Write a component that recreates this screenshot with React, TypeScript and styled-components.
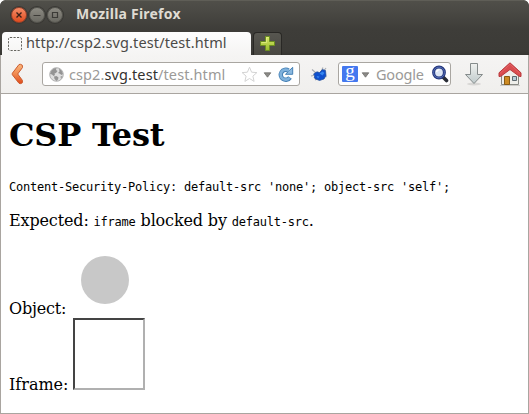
import React from 'react';
import styled, { createGlobalStyle } from 'styled-components';

const GlobalStyle = createGlobalStyle`
  * { box-sizing: border-box; }
  html, body { margin: 0; padding: 0; background: #fff; overflow: hidden; }
`;

const Window = styled.div`
  width: 529px;
  height: 414px;
  display: flex;
  flex-direction: column;
  background: #3c3b37;
  border-radius: 6px 6px 0 0;
  overflow: hidden;
  font-family: 'Noto Sans', 'Open Sans', sans-serif;
`;

const Frame = styled.div`
  height: 55px;
  flex: none;
  display: flex;
  flex-direction: column;
  background: linear-gradient(#504f49 0, #4a4944 10px, #3e3d39 28px, #3c3b37 50px, #353430 55px);
  border-top: 1px solid #5f5e57;
  border-radius: 6px 6px 0 0;
`;

const TitleBar = styled.div`
  height: 31px;
  flex: none;
  display: flex;
  align-items: center;
  padding: 0 0 4px 11px;
`;

const WindowButton = styled.span<{ $close?: boolean }>`
  width: 16px;
  height: 16px;
  margin-right: 2px;
  border-radius: 50%;
  display: flex;
  border: 1px solid ${p => (p.$close ? '#92402a' : '#55544e')};
  background: ${p => (p.$close ? 'linear-gradient(#f58c67, #df4b1e)' : 'linear-gradient(#8c8a82, #6a6962)')};
  box-shadow: 0 0 0 1px #393834;
`;

const Title = styled.span`
  margin: 0 0 2px 11px;
  color: #dfdbd2;
  font-size: 14px;
  line-height: 20px;
  font-weight: 700;
  letter-spacing: 0.22px;
  white-space: pre;
`;

const TabStrip = styled.div`
  height: 23px;
  flex: none;
  display: flex;
  gap: 2px;
  padding-left: 2px;
`;

const Tab = styled.div`
  width: 249px;
  height: 23px;
  display: flex;
  align-items: center;
  gap: 4px;
  padding-left: 6px;
  background: linear-gradient(#fdfdfd, #f5f4f3);
  border-radius: 4px 4px 0 0;
  color: #4b4a47;
  font-size: 14.5px;
  line-height: 21px;
  letter-spacing: 0.12px;
  white-space: pre;
`;

const TabLabel = styled.span`
  margin-bottom: 2px;
`;

const NewTab = styled.div`
  width: 29px;
  height: 23px;
  display: flex;
  justify-content: center;
  padding-top: 2px;
  border: 1px solid #292825;
  border-bottom: 0;
  border-radius: 4px 4px 0 0;
  background: linear-gradient(#575650, #484741);
`;

const Toolbar = styled.div`
  height: 39px;
  flex: none;
  display: flex;
  align-items: center;
  padding: 0 5px 0 9px;
  background: linear-gradient(#f5f4f3, #f0efed);
  border: 1px solid #a9a5a0;
  border-top: 0;
`;

const Icon = styled.svg<{ $left?: number; $top?: number }>`
  display: block;
  flex: none;
  margin-left: ${p => p.$left ?? 0}px;
  margin-top: ${p => p.$top ?? 0}px;
`;

const Field = styled.div<{ $width: number; $left: number }>`
  width: ${p => p.$width}px;
  height: 24px;
  flex: none;
  margin-left: ${p => p.$left}px;
  display: flex;
  align-items: center;
  border: 1px solid #a9a6a1;
  border-radius: 3px;
  background: #fff;
  color: #9b9a98;
  font-size: 14.5px;
  line-height: 22px;
  white-space: pre;
`;

const Url = styled.span`
  width: 172px;
  flex: none;
  margin: 0 0 1px 5px;
  letter-spacing: 0.1px;
`;

const Host = styled.span`
  color: #33322f;
`;

const Placeholder = styled.span`
  width: 55px;
  flex: none;
  margin: 0 0 1px 6px;
  letter-spacing: -0.2px;
`;

const Page = styled.main`
  flex: 1;
  min-height: 0;
  padding: 21px 8px 0;
  background: #fff;
  border: 1px solid #a9a5a0;
  border-top: 0;
  color: #000;
  font: 16px/19px 'DejaVu Serif', serif;
`;

const Heading = styled.h1`
  margin: 0;
  height: 65px;
  font-size: 32px;
  line-height: 41px;
  letter-spacing: -0.22px;
  white-space: nowrap;
`;

const Policy = styled.pre`
  margin: 0;
  height: 31px;
  font: 12px/15px 'DejaVu Sans Mono', monospace;
  letter-spacing: -0.225px;
`;

const Paragraph = styled.p`
  margin: 0;
  height: 37px;
  letter-spacing: -0.14px;
  white-space: nowrap;
`;

const Code = styled.code`
  font: 12px 'DejaVu Sans Mono', monospace;
  letter-spacing: -0.225px;
`;

const EmbedRow = styled.div<{ $height: number; $gap: number }>`
  height: ${p => p.$height}px;
  display: flex;
  align-items: flex-end;
  gap: ${p => p.$gap}px;
`;

const EmbedLabel = styled.span<{ $drop: number; $spacing: number }>`
  width: 64px;
  margin-bottom: ${p => p.$drop}px;
  letter-spacing: ${p => p.$spacing}px;
  white-space: nowrap;
`;

const ObjectCircle = styled.div`
  width: 48px;
  height: 48px;
  margin-bottom: 14px;
  border-radius: 50%;
  background: #c8c8c8;
`;

const BlockedFrame = styled.div`
  width: 72px;
  height: 72px;
  border: 2px solid;
  border-color: #444 #b0b0b0 #b0b0b0 #444;
`;

const CloseGlyph = () => (
  <Icon width="14" height="14" viewBox="0 0 14 14">
    <path d="M4.500 4.500l5 5m0-5l-5 5" stroke="#3c2018" strokeWidth="1.400" fill="none" />
  </Icon>
);
const MinimizeGlyph = () => (
  <Icon width="14" height="14" viewBox="0 0 14 14">
    <path d="M3.500 7.500h7" stroke="#3c3b37" strokeWidth="1.200" fill="none" />
  </Icon>
);
const MaximizeGlyph = () => (
  <Icon width="14" height="14" viewBox="0 0 14 14">
    <path d="M4.500 4.500h5v5h-5z" stroke="#3c3b37" strokeWidth="1.200" fill="none" />
  </Icon>
);
const BlankFavicon = () => (
  <Icon width="14" height="14" viewBox="0 0 14 14">
    <rect x=".5" y=".5" width="13" height="13" rx="1.500" fill="none" stroke="#66655f" strokeDasharray="2.200 1.300" />
  </Icon>
);
const PlusIcon = () => (
  <Icon width="17" height="17" viewBox="0 0 17 17">
    <defs>
      <linearGradient id="plus" x2="0" y2="1">
        <stop stopColor="#d9e86c" />
        <stop offset="1" stopColor="#98bc2b" />
      </linearGradient>
    </defs>
    <path d="M6.500 1.500h4v5h5v4h-5v5h-4v-5h-5v-4h5z" fill="url(#plus)" stroke="#6c8f20" />
    <path d="M7.500 7.500v-5h2M2.500 7.500h5" fill="none" stroke="#e6f08d" strokeWidth=".7" />
  </Icon>
);
const BackIcon = () => (
  <Icon width="14" height="22" viewBox="0 0 14 22">
    <defs>
      <linearGradient id="back" x2="0" y2="1">
        <stop stopColor="#f9b77d" />
        <stop offset=".5" stopColor="#f18a50" />
        <stop offset="1" stopColor="#df4a1b" />
      </linearGradient>
    </defs>
    <path d="M9 1.500Q10.500.8 12.300 2.200L12.500 4.500 7.700 11l4.800 6.500-.2 2.300Q10.500 21.200 9 20.300L2.300 11.700V10.300z" fill="url(#back)" stroke="#ca5b2e" strokeLinejoin="round" />
  </Icon>
);
const GlobeIcon = () => (
  <Icon $left={6} width="15" height="15" viewBox="0 0 15 15">
    <circle cx="7.500" cy="7.500" r="6.800" fill="#dedede" stroke="#a0a0a0" strokeWidth=".8" />
    <path d="M1 7L2.500 3.500 5 1.500 7.500 1 7 3 8.500 4 7 6 5.500 6.500 6 8 4.500 9 3 7.500zM10 1.500l2.500 2L14 7l-1.500 1-2-1.500L9 6l1.500-1.500zM5 9.500L7.500 9l2 1.500-.5 2L7.500 14 5.500 12zM11.500 9.500l2-.5-1.500 3z" fill="#949494" />
  </Icon>
);
const StarIcon = () => (
  <Icon width="17" height="17" viewBox="0 0 17 17">
    <path d="M8.500 1.200l2.100 5 5.300.4-4 3.500 1.200 5.300-4.600-2.900-4.600 2.900 1.200-5.300-4-3.500 5.300-.4z" fill="#fff" stroke="#d3d3d3" strokeLinejoin="round" />
  </Icon>
);
const DropArrow = ({ left }: { left: number }) => (
  <Icon $left={left} $top={2} width="9" height="6" viewBox="0 0 9 6">
    <path d="M1.200.8h6.600L4.500 5.200z" fill="#8b8a87" stroke="#71706c" strokeWidth=".8" />
  </Icon>
);
const ReloadIcon = () => (
  <Icon $left={5} width="17" height="17" viewBox="0 0 17 17">
    <path d="M11.500 4.600A5 5 0 1 0 13 11.500" fill="none" stroke="#4681b5" strokeWidth="4.400" />
    <path d="M15.700 1.300v7H8.500L11 5.900l2-2z" fill="#8ab8df" stroke="#4681b5" strokeWidth="1" />
    <path d="M12 4.900A5 5 0 1 0 12.600 11.700" fill="none" stroke="#7fb1dc" strokeWidth="2.600" />
  </Icon>
);
const BugIcon = () => (
  <Icon $left={10} width="18" height="18" viewBox="0 0 18 18">
    <path d="M2 4.500L6 8M13 2.500l-2 4M16 3l-3 4M1 11l5-1M14 9l2.500 3M5 15l4-2" stroke="#aaaeb5" strokeWidth="1.200" />
    <path d="M3.500 9L7 6.800l2.500.8L12.500 4.500l3 1 .5 5-2 3.500-4.500 1.500-4.500-1.800L4 12l1-1z" fill="#0f50ce" stroke="#234e96" strokeWidth=".7" />
    <path d="M9.500 8.500l3-2 2 1.500-2 2.500zM6.500 11l3 .5-1.500 2z" fill="#3585ef" />
  </Icon>
);
const GoogleBadge = styled.span`
  width: 16px;
  height: 16px;
  margin-left: 3px;
  flex: none;
  background: #4478ef;
  border-radius: 1px;
  color: #fff;
  font: 19px/10px 'Liberation Serif', serif;
  text-align: center;
`;
const SearchIcon = () => (
  <Icon width="18" height="18" viewBox="0 0 18 18">
    <path d="M12 12l3.500 3.500" stroke="#292c35" strokeWidth="3.600" strokeLinecap="round" />
    <circle cx="8" cy="7.500" r="5.400" fill="#dce5f4" stroke="#25377c" strokeWidth="3" />
    <circle cx="8" cy="7.500" r="5.400" fill="none" stroke="#5670b9" strokeWidth="1" />
    <path d="M5.500 7A3 3 0 0 1 8.500 4.700" fill="none" stroke="#fff" strokeWidth="1.300" />
  </Icon>
);
const DownloadIcon = () => (
  <Icon $left={13} width="20" height="24" viewBox="0 0 20 24">
    <defs>
      <linearGradient id="down" x2="0" y2="1">
        <stop stopColor="#f0f1ef" />
        <stop offset="1" stopColor="#bfcacb" />
      </linearGradient>
    </defs>
    <ellipse cx="10" cy="22" rx="7" ry="1.500" fill="#d8d7d5" />
    <path d="M6.500 1.500h7v11h5L10 21.500 1.500 12.500h5z" fill="url(#down)" stroke="#858b8b" strokeLinejoin="round" />
  </Icon>
);
const HomeIcon = () => (
  <Icon $left={14} width="24" height="24" viewBox="0 0 24 24">
    <path d="M3.500 11L12 4l8.500 7v11.500h-17z" fill="#eeeeea" stroke="#888a85" />
    <path d="M6.500 14.500h5v8h-5z" fill="#cd8b23" stroke="#885a14" />
    <path d="M14.500 14.500h4v4h-4z" fill="#b7ced9" stroke="#5d686e" />
    <path d="M12 .8L1 10.800v3.700h1.500l9.500-7 9.500 7H23v-3.700z" fill="#d94c4f" stroke="#b8393c" strokeLinejoin="round" />
    <path d="M2 11.500L12 2.200l10 9.300" fill="none" stroke="#e76c6e" strokeWidth=".7" />
    <path d="M2 23.500h20" stroke="#cccbc8" />
  </Icon>
);

export default function App() {
  return (
    <>
      <GlobalStyle />
      <Window>
        <Frame>
          <TitleBar>
            <WindowButton $close><CloseGlyph /></WindowButton>
            <WindowButton><MinimizeGlyph /></WindowButton>
            <WindowButton><MaximizeGlyph /></WindowButton>
            <Title>Mozilla Firefox</Title>
          </TitleBar>
          <TabStrip>
            <Tab><BlankFavicon /><TabLabel>http://csp2.svg.test/test.html</TabLabel></Tab>
            <NewTab><PlusIcon /></NewTab>
          </TabStrip>
        </Frame>
        <Toolbar>
          <BackIcon />
          <Field $width={258} $left={18}>
            <GlobeIcon />
            <Url>csp2.<Host>svg.test</Host>/test.html</Url>
            <StarIcon />
            <DropArrow left={5} />
            <ReloadIcon />
          </Field>
          <BugIcon />
          <Field $width={113} $left={10}>
            <GoogleBadge>g</GoogleBadge>
            <DropArrow left={3} />
            <Placeholder>Google</Placeholder>
            <SearchIcon />
          </Field>
          <DownloadIcon />
          <HomeIcon />
        </Toolbar>
        <Page>
          <Heading>CSP Test</Heading>
          <Policy>Content-Security-Policy: default-src 'none'; object-src 'self';</Policy>
          <Paragraph>Expected: <Code>iframe</Code> blocked by <Code>default-src</Code>.</Paragraph>
          <EmbedRow $height={70} $gap={8}>
            <EmbedLabel $drop={0} $spacing={-0.2}>Object:</EmbedLabel>
            <ObjectCircle />
          </EmbedRow>
          <EmbedRow $height={72} $gap={0}>
            <EmbedLabel $drop={-4} $spacing={0}>Iframe:</EmbedLabel>
            <BlockedFrame />
          </EmbedRow>
        </Page>
      </Window>
    </>
  );
}
